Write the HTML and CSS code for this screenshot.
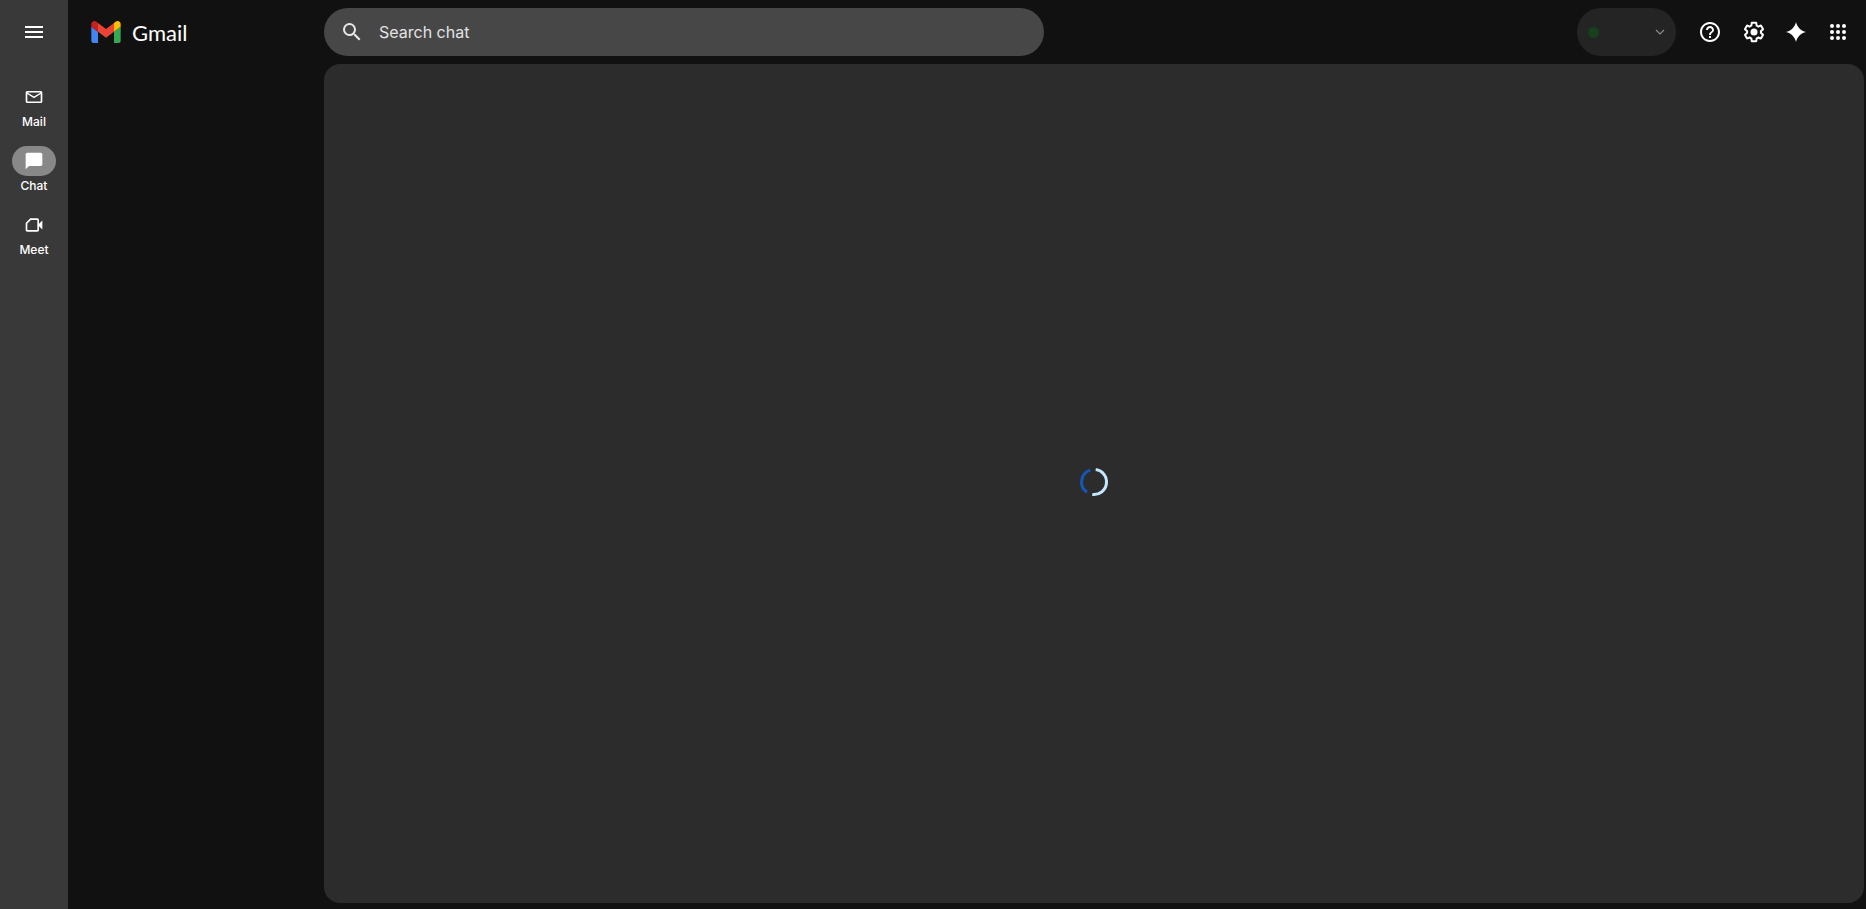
FILE: index.html
```html
<!DOCTYPE html>
<html lang="en">
<head>
  <meta charset="utf-8">
  <title>Gmail</title>
  <link rel="stylesheet" href="styles.css">
</head>
<body>

<!-- Left rail -->
<nav class="rail">
  <button class="menu-button" type="button" aria-label="Main menu">
    <svg width="24" height="24" viewBox="0 0 24 24"><path d="M3 6h18v2H3zM3 11h18v2H3zM3 16h18v2H3z"/></svg>
  </button>
  <a class="rail-item" href="#mail">
    <span class="rail-icon">
      <svg width="20" height="20" viewBox="0 0 24 24"><path d="M22 6.500c0-1-.9-1.800-2-1.800H4c-1.100 0-2 .8-2 1.800v11c0 1 .9 1.800 2 1.800h16c1.100 0 2-.8 2-1.800v-11zm-2 0l-8 5-8-5h16zm0 11H4v-9l8 5 8-5v9z"/></svg>
    </span>
    <span>Mail</span>
  </a>
  <a class="rail-item active" href="#chat">
    <span class="rail-icon">
      <svg width="20" height="20" viewBox="0 0 24 24"><path d="M20 2H4c-1.100 0-2 .9-2 2v18l4-4h14c1.100 0 2-.9 2-2V4c0-1.100-.9-2-2-2z"/></svg>
    </span>
    <span>Chat</span>
  </a>
  <a class="rail-item" href="#meet">
    <span class="rail-icon">
      <svg width="20" height="20" viewBox="0 0 24 24"><path fill-rule="evenodd" d="M7.500 4H16c1.100 0 2 .9 2 2v4.500l4-4v11l-4-4V18c0 1.100-.9 2-2 2H4c-1.100 0-2-.9-2-2V9.500zM8.300 6L4 10.300V18h12V6z"/></svg>
    </span>
    <span>Meet</span>
  </a>
</nav>

<div class="app">
  <header class="topbar">
    <a class="brand" href="#home">
      <svg width="30" height="22" viewBox="52 42 88 66">
        <path fill="#4285f4" d="M58 108h14V74L52 59v43c0 3.320 2.690 6 6 6"/>
        <path fill="#34a853" d="M120 108h14c3.320 0 6-2.690 6-6V59l-20 15"/>
        <path fill="#fbbc04" d="M120 48v26l20-15v-8c0-7.420-8.470-11.650-14.400-7.200"/>
        <path fill="#ea4335" d="M72 74V48l24 18 24-18v26L96 92"/>
        <path fill="#c5221f" d="M52 51v8l20 15V48l-5.600-4.200c-5.940-4.450-14.400-.22-14.400 7.200"/>
      </svg>
      <span>Gmail</span>
    </a>

    <form class="search">
      <button type="submit" aria-label="Search">
        <svg width="24" height="24" viewBox="0 0 24 24"><path d="M15.500 14h-.79l-.28-.27A6.471 6.471 0 0 0 16 9.500 6.500 6.500 0 1 0 9.500 16c1.610 0 3.090-.59 4.230-1.570l.27.28v.79l5 4.990L20.490 19l-4.990-5zm-6 0C7.010 14 5 11.990 5 9.500S7.010 5 9.500 5 14 7.010 14 9.500 11.990 14 9.500 14z"/></svg>
      </button>
      <input type="text" placeholder="Search chat" aria-label="Search chat">
    </form>

    <div class="tools">
      <button class="status" type="button" aria-label="Status">
        <span class="status-dot"></span>
        <svg width="10" height="10" viewBox="0 0 10 10"><path d="M1 3l4 4 4-4" fill="none" stroke="#8a8a8a" stroke-width="1.200"/></svg>
      </button>
      <button class="tool support" type="button" aria-label="Support">
        <svg width="24" height="24" viewBox="0 0 24 24"><path d="M11 18h2v-2h-2v2zm1-16C6.480 2 2 6.480 2 12s4.480 10 10 10 10-4.480 10-10S17.520 2 12 2zm0 18c-4.410 0-8-3.590-8-8s3.590-8 8-8 8 3.590 8 8-3.590 8-8 8zm0-14c-2.210 0-4 1.790-4 4h2c0-1.100.9-2 2-2s2 .9 2 2c0 2-3 1.750-3 5h2c0-2.250 3-2.500 3-5 0-2.210-1.790-4-4-4z"/></svg>
      </button>
      <button class="tool" type="button" aria-label="Settings">
        <svg width="24" height="24" viewBox="0 0 24 24">
          <path d="M13.850 22.250h-3.700c-.74 0-1.360-.54-1.450-1.270l-.27-1.890c-.27-.14-.53-.29-.79-.46l-1.800.72c-.7.260-1.470-.03-1.810-.65L2.200 15.530c-.35-.66-.2-1.440.36-1.880l1.530-1.190c-.01-.15-.02-.3-.02-.46 0-.15.010-.31.020-.46l-1.520-1.190c-.59-.45-.74-1.260-.37-1.880l1.850-3.190c.34-.62 1.110-.9 1.790-.63l1.810.73c.26-.17.52-.32.780-.46l.27-1.910c.09-.7.710-1.250 1.440-1.250h3.700c.74 0 1.360.54 1.450 1.270l.27 1.890c.27.140.53.290.79.460l1.800-.72c.71-.26 1.480.03 1.820.65l1.840 3.180c.36.660.2 1.440-.36 1.880l-1.520 1.190c.010.150.020.300.020.460s-.010.310-.020.460l1.520 1.190c.56.450.72 1.230.37 1.860l-1.860 3.220c-.34.620-1.110.9-1.800.63l-1.800-.72c-.26.170-.52.320-.78.460l-.27 1.910c-.1.680-.72 1.220-1.460 1.220zm-3.230-2h2.760l.37-2.550.53-.22c.44-.18.880-.44 1.340-.78l.45-.34 2.380.96 1.380-2.400-2.030-1.580.07-.56c.03-.26.060-.51.060-.78s-.03-.53-.06-.78l-.07-.56 2.030-1.580-1.390-2.400-2.390.96-.45-.35c-.42-.32-.87-.58-1.330-.77l-.52-.22-.37-2.550h-2.760l-.37 2.550-.53.210c-.44.190-.88.440-1.340.79l-.45.330-2.380-.95-1.390 2.390 2.030 1.580-.07.560a7 7 0 0 0-.06.790c0 .26.020.53.060.78l.07.560-2.030 1.580 1.380 2.400 2.390-.96.450.35c.43.330.86.580 1.330.77l.53.220z"/>
          <circle cx="12" cy="12" r="3.500"/>
        </svg>
      </button>
      <button class="tool" type="button" aria-label="Gemini">
        <svg width="24" height="24" viewBox="0 0 24 24"><path d="M12 2C13 7 17 11 22 12 17 13 13 17 12 22 11 17 7 13 2 12 7 11 11 7 12 2z"/></svg>
      </button>
      <button class="tool" type="button" aria-label="Google apps">
        <svg width="24" height="24" viewBox="0 0 24 24">
          <circle cx="6" cy="6" r="2"/><circle cx="12" cy="6" r="2"/><circle cx="18" cy="6" r="2"/>
          <circle cx="6" cy="12" r="2"/><circle cx="12" cy="12" r="2"/><circle cx="18" cy="12" r="2"/>
          <circle cx="6" cy="18" r="2"/><circle cx="12" cy="18" r="2"/><circle cx="18" cy="18" r="2"/>
        </svg>
      </button>
    </div>
  </header>

  <!-- Chat panel, still loading -->
  <main class="panel">
    <svg class="spinner" width="30" height="30" viewBox="0 0 30 30" role="img" aria-label="Loading">
      <path stroke="#c2e7ff" d="M16.700 2.600A12.500 12.500 0 0 1 13.300 27.400"/>
      <path stroke="#1557b8" d="M11.200 3.100A12.500 12.500 0 0 0 8 25.300"/>
    </svg>
  </main>
</div>

</body>
</html>
```
FILE: styles.css
```css
* {
  box-sizing: border-box;
}

body {
  display: flex;
  min-height: 100vh;
  margin: 0;
  background-color: #111;
  color: #fff;
  font-family: Inter, "Liberation Sans", sans-serif;
}

button {
  padding: 0;
  border: none;
  background: none;
  color: inherit;
  cursor: pointer;
}

a {
  color: inherit;
  text-decoration: none;
}

svg {
  display: block;
  fill: currentColor;
}

/* Left rail */
.rail {
  display: flex;
  flex-direction: column;
  align-items: center;
  flex: none;
  width: 68px;
  background-color: #393939;
}

.menu-button {
  height: 64px;
  margin-bottom: 18px;
}

.rail-item {
  display: flex;
  flex-direction: column;
  align-items: center;
  gap: 2px;
  height: 64px;
  font-size: 12px;
  font-weight: 500;
  line-height: 16px;
}

.rail-icon {
  display: flex;
  align-items: center;
  justify-content: center;
  width: 44px;
  height: 30px;
  border-radius: 15px;
}

.active .rail-icon {
  background-color: #888;
}

/* Top bar */
.app {
  display: flex;
  flex-direction: column;
  flex: 1;
  min-width: 0;
}

.topbar {
  display: flex;
  align-items: center;
  height: 64px;
}

.brand {
  display: flex;
  align-items: center;
  gap: 11px;
  flex: none;
  width: 256px;
  padding-left: 23px;
  font-family: Lato, sans-serif;
  font-size: 22px;
}

.search {
  display: flex;
  align-items: center;
  gap: 15px;
  flex: 0 1 720px;
  height: 48px;
  padding: 0 16px;
  border-radius: 24px;
  background-color: #474747;
  color: #e8e8e8;
}

.search input {
  flex: 1;
  min-width: 0;
  padding: 0;
  border: none;
  outline: none;
  background: none;
  color: inherit;
  font-family: inherit;
  font-size: 16px;
}

.search input::placeholder {
  color: #e3e3e3;
}

.tools {
  display: flex;
  align-items: center;
  gap: 18px;
  margin-left: auto;
  padding-right: 16px;
}

.status {
  display: flex;
  align-items: center;
  justify-content: space-between;
  width: 99px;
  height: 48px;
  margin-right: 4px;
  padding: 0 11px;
  border-radius: 24px;
  background-color: #242424;
}

.status-dot {
  width: 11px;
  height: 11px;
  border-radius: 50%;
  background-color: #17401d;
}

.support {
  margin-right: 2px;
}

/* Chat panel */
.panel {
  display: flex;
  align-items: center;
  justify-content: center;
  flex: 1;
  margin: 0 2px 6px 256px;
  padding-bottom: 4px;
  border-radius: 16px;
  background-color: #2c2c2c;
}

.spinner {
  fill: none;
  stroke-width: 3;
}
```
